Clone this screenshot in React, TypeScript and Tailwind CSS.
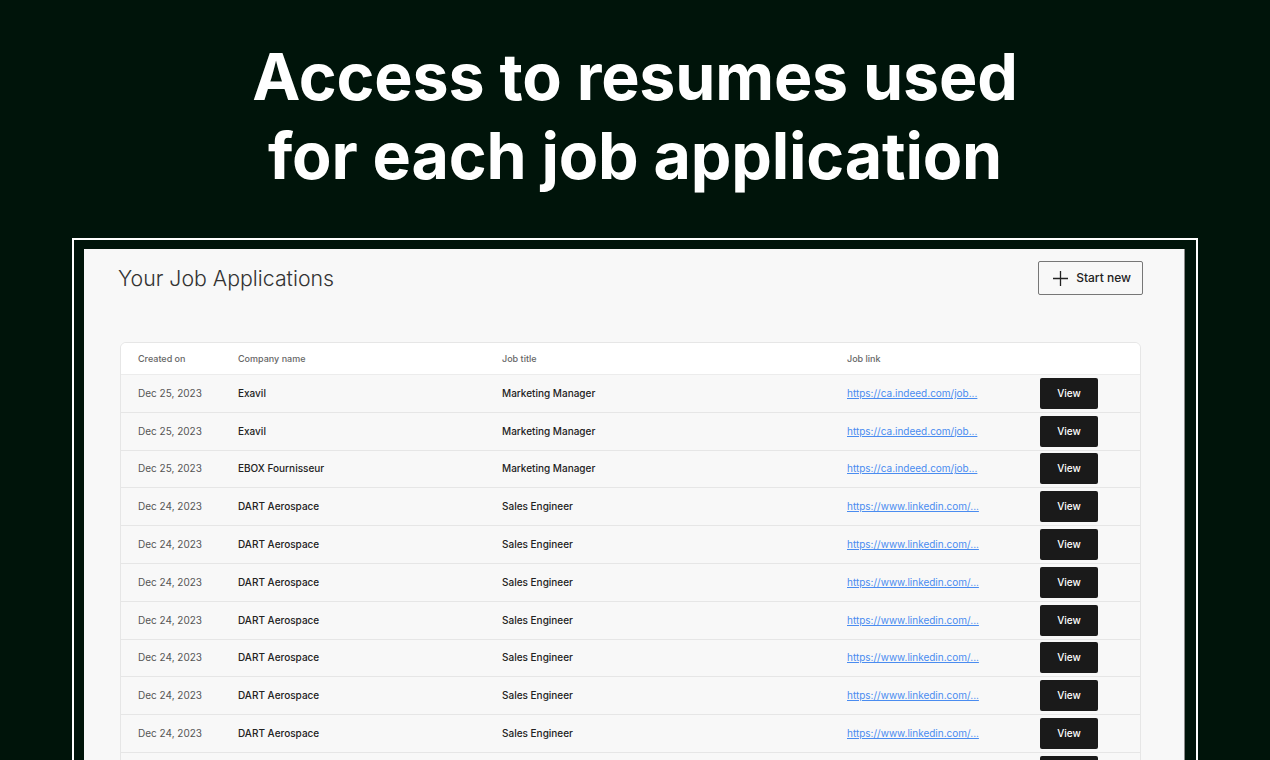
import React from 'react';

type Application = {
  created: string;
  company: string;
  title: string;
  link: string;
};

const indeed = 'https://ca.indeed.com/job...';
const linkedin = 'https://www.linkedin.com/...';

const applications: Application[] = [
  { created: 'Dec 25, 2023', company: 'Exavil', title: 'Marketing Manager', link: indeed },
  { created: 'Dec 25, 2023', company: 'Exavil', title: 'Marketing Manager', link: indeed },
  { created: 'Dec 25, 2023', company: 'EBOX Fournisseur', title: 'Marketing Manager', link: indeed },
  { created: 'Dec 24, 2023', company: 'DART Aerospace', title: 'Sales Engineer', link: linkedin },
  { created: 'Dec 24, 2023', company: 'DART Aerospace', title: 'Sales Engineer', link: linkedin },
  { created: 'Dec 24, 2023', company: 'DART Aerospace', title: 'Sales Engineer', link: linkedin },
  { created: 'Dec 24, 2023', company: 'DART Aerospace', title: 'Sales Engineer', link: linkedin },
  { created: 'Dec 24, 2023', company: 'DART Aerospace', title: 'Sales Engineer', link: linkedin },
  { created: 'Dec 24, 2023', company: 'DART Aerospace', title: 'Sales Engineer', link: linkedin },
  { created: 'Dec 24, 2023', company: 'DART Aerospace', title: 'Sales Engineer', link: linkedin },
];

const cols = 'grid grid-cols-[100px_264px_345px_193px_1fr] pl-[17px]';

const PlusIcon: React.FC = () => (
  <svg width="17" height="17" viewBox="0 0 17 17" fill="none" stroke="#222" strokeWidth="1.3">
    <path d="M8.5 1v15M1 8.5h15" />
  </svg>
);

const App: React.FC = () => {
  return (
    <div
      className="h-[760px] overflow-hidden bg-[#00140a] flex flex-col items-center"
      style={{ fontFamily: 'Inter, "Noto Sans", sans-serif' }}
    >
      <h1 className="mt-[38px] text-center text-white font-bold text-[64.5px] leading-[79px] tracking-[-0.2px]">
        Access to resumes used
        <br />
        for each job application
      </h1>

      <div className="mt-[42px] w-[1126px] flex-1 border-2 border-b-0 border-white pt-[9px] pl-[10px] pr-[11px]">
        <div className="h-full bg-[#f8f8f8] border-r border-[#8a8a8a] pl-[36px] pr-[43px]">
          <div className="flex items-start justify-between pt-[12px]">
            <h2 className="mt-[2px] -ml-[2px] text-[21.3px] font-light text-[#333]">Your Job Applications</h2>
            <button className="-mr-[2px] flex items-center gap-[7px] h-[34px] pl-[13px] pr-[11px] border border-[#777] rounded-[2px] text-[12px] font-medium text-[#222]">
              <PlusIcon />
              Start new
            </button>
          </div>

          <div className="mt-[47px] border border-[#e6e6e6] rounded-[6px] overflow-hidden">
            <div className={`${cols} h-[32px] items-center bg-white border-b border-[#ececec] text-[9px] font-medium text-[#666]`}>
              <div>Created on</div>
              <div>Company name</div>
              <div>Job title</div>
              <div>Job link</div>
              <div />
            </div>
            {applications.map((a, i) => (
              <div key={i} className={`${cols} h-[37.8px] items-center border-b border-[#e6e6e6] text-[10px]`}>
                <div className="text-[#555]">{a.created}</div>
                <div className="font-medium text-[#222]">{a.company}</div>
                <div className="font-medium text-[#222]">{a.title}</div>
                <div>
                  <a href="#" className="text-[#4a8cf0] underline">{a.link}</a>
                </div>
                <div>
                  <button className="w-[58px] h-[31px] bg-[#1a1a1a] rounded-[2px] text-white text-[10px] font-medium">View</button>
                </div>
              </div>
            ))}
            <div className={`${cols} h-[37.8px] items-start`}>
              <div />
              <div />
              <div />
              <div />
              <div className="pt-[3px]">
                <div className="w-[58px] h-[31px] bg-[#1a1a1a] rounded-[2px]" />
              </div>
            </div>
          </div>
        </div>
      </div>
    </div>
  );
};

export default App;
